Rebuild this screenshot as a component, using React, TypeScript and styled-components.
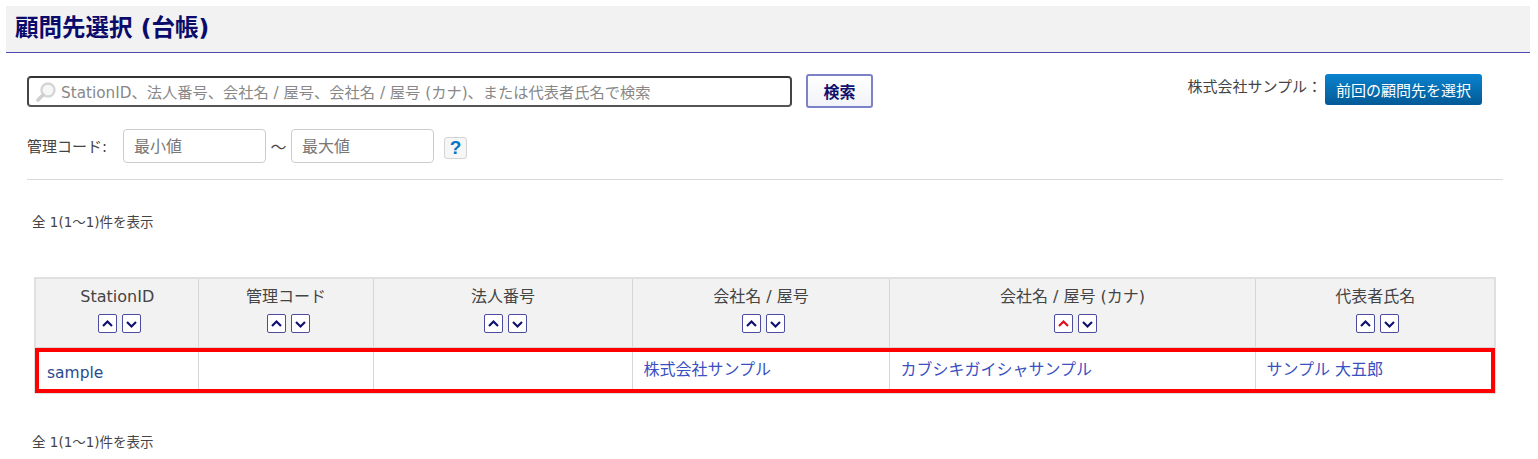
import React from "react";
import styled, { createGlobalStyle } from "styled-components";

const FONT = `"DejaVu Sans", "Noto Sans CJK JP", sans-serif`;

const Global = createGlobalStyle`
  html, body { margin: 0; padding: 0; background: #fff; }
  body { font-family: ${FONT}; color: #444; overflow: hidden; }
`;

const Page = styled.div`
  width: 1538px;
  height: 459px;
  padding-top: 6px;
  box-sizing: border-box;
`;

const TitleBar = styled.div`
  margin: 0 8px 0 6px;
  height: 47px;
  box-sizing: border-box;
  background: #f2f2f2;
  border-bottom: 1px solid #4a4aae;
  padding: 0 9px;
  display: flex;
  align-items: center;
`;

const Title = styled.h1`
  margin: 0;
  font-size: 23.5px;
  line-height: 1;
  font-weight: 700;
  color: #0b0b6b;
`;

const Content = styled.div`
  padding: 21px 35px 0 27px;
`;

const SearchRow = styled.div`
  display: flex;
  align-items: flex-start;
  height: 34px;
`;

const SearchBox = styled.div`
  width: 765px;
  height: 31px;
  margin-top: 2px;
  box-sizing: border-box;
  border: 2px solid #444;
  border-radius: 4px;
  border-top-color: #333;
  border-bottom-color: #555;
  background: #fff;
  display: flex;
  align-items: center;
  gap: 4px;
  padding: 0 0 2px 6px;
  font-size: 15.25px;
  color: #888;
  white-space: nowrap;
`;

const SearchButton = styled.button`
  margin-left: 14px;
  width: 67px;
  height: 34px;
  padding: 0;
  box-sizing: border-box;
  border: 2px solid #7b82c8;
  border-radius: 3px;
  background: linear-gradient(#ffffff, #f2f3f8);
  color: #12126e;
  font: 700 16px ${FONT};
`;

const Previous = styled.div`
  margin-left: auto;
  margin-right: 21px;
  display: flex;
  align-items: flex-start;
  gap: 3px;
`;

const PreviousName = styled.span`
  font-size: 15px;
  line-height: 22px;
  margin-top: 2px;
  color: #444;
  white-space: nowrap;
`;

const PreviousButton = styled.button`
  width: 157px;
  height: 31px;
  padding: 0;
  border: 0;
  border-radius: 3px;
  background: linear-gradient(#0a83cf, #035a96);
  color: #fff;
  font: 400 15px ${FONT};
  white-space: nowrap;
`;

const CodeRow = styled.div`
  display: flex;
  align-items: center;
  margin-top: 21px;
  height: 34px;
`;

const CodeLabel = styled.span`
  width: 96px;
  padding-bottom: 2px;
  font-size: 15px;
  color: #444;
  white-space: nowrap;
`;

const RangeInput = styled.div`
  width: 143px;
  height: 34px;
  box-sizing: border-box;
  border: 1px solid #ccc;
  border-radius: 4px;
  padding: 0 0 2px 10px;
  display: flex;
  align-items: center;
  font-size: 16px;
  color: #777;
`;

const Tilde = styled.span`
  width: 25px;
  text-align: center;
  font-size: 16px;
  color: #444;
`;

const HelpButton = styled.span`
  margin: 4px 0 0 10px;
  width: 23px;
  height: 22px;
  box-sizing: border-box;
  border: 1px solid #d4d4d4;
  border-radius: 3px;
  background: #f6f6f6;
  color: #0a74c4;
  display: flex;
  align-items: center;
  justify-content: center;
  font: 700 19px "Liberation Sans", sans-serif;
`;

const Divider = styled.hr`
  margin: 16px 0 0;
  border: 0;
  border-top: 1px solid #d8d8d8;
`;

const Count = styled.p<{ $top: number }>`
  margin: ${(p) => p.$top}px 0 0 5px;
  font-size: 13.5px;
  line-height: 18px;
  color: #444;
`;

const Table = styled.table`
  margin: 46px 0 0 7px;
  width: 1460px;
  border-collapse: collapse;
  table-layout: fixed;
  border: 2px solid #e0e0e0;
`;

const HeadCell = styled.th`
  height: 68px;
  padding: 0;
  background: #f2f2f2;
  border: 1px solid #d6d6d6;
  font-weight: 400;
  font-size: 16px;
  color: #444;
  vertical-align: top;
`;

const HeadLabel = styled.div`
  margin-top: 6px;
  padding-left: 1px;
  line-height: 24px;
`;

const SortGroup = styled.div`
  display: flex;
  justify-content: center;
  gap: 5px;
  margin-top: 5px;
  padding-left: 6px;
`;

const SortButton = styled.span`
  width: 19px;
  height: 19px;
  box-sizing: border-box;
  border: 1px solid #4c4c9e;
  border-radius: 2px;
  background: #fff;
  display: flex;
  align-items: center;
  justify-content: center;
`;

const DataRow = styled.tr`
  outline: 4px solid #f00;
  outline-offset: -4px;
`;

const DataCell = styled.td`
  height: 45px;
  box-sizing: border-box;
  padding: 0 11px 3px;
  border: 1px solid #d6d6d6;
  border-top: 0;
  font-size: 16px;
  background: #fff;
`;

const IdLink = styled.a`
  color: #2b4a8e;
  display: inline-block;
  font-size: 15.5px;
  padding-top: 10px;
`;

const RowLink = styled.a`
  color: #3a50c0;
`;

function Chevron({ dir, color }: { dir: "up" | "down"; color: string }) {
  const d = dir === "up" ? "M2 8 L6.5 3.5 L11 8" : "M2 4 L6.5 8.5 L11 4";
  return (
    <svg width="13" height="12" viewBox="0 0 13 12" fill="none">
      <path d={d} stroke={color} strokeWidth="2.2" />
    </svg>
  );
}

function Sort({ active }: { active?: boolean }) {
  return (
    <SortGroup>
      <SortButton>
        <Chevron dir="up" color={active ? "#e0101c" : "#12126e"} />
      </SortButton>
      <SortButton>
        <Chevron dir="down" color="#12126e" />
      </SortButton>
    </SortGroup>
  );
}

function Magnifier() {
  return (
    <svg width="22" height="22" viewBox="0 0 22 22" fill="none" style={{ flex: "none", marginTop: 2 }}>
      <circle cx="13" cy="9" r="6.5" stroke="#d6d6d6" strokeWidth="2.4" fill="#f7f7f7" />
      <path d="M8 14 L3 19" stroke="#cfcfcf" strokeWidth="3.6" strokeLinecap="round" />
    </svg>
  );
}

const columns: { label: string; width: number; active?: boolean }[] = [
  { label: "StationID", width: 163 },
  { label: "管理コード", width: 175 },
  { label: "法人番号", width: 259 },
  { label: "会社名 / 屋号", width: 257 },
  { label: "会社名 / 屋号 (カナ)", width: 366, active: true },
  { label: "代表者氏名", width: 240 },
];

export default function App() {
  return (
    <Page>
      <Global />
      <TitleBar>
        <Title>顧問先選択 (台帳)</Title>
      </TitleBar>
      <Content>
        <SearchRow>
          <SearchBox>
            <Magnifier />
            StationID、法人番号、会社名 / 屋号、会社名 / 屋号 (カナ)、または代表者氏名で検索
          </SearchBox>
          <SearchButton>検索</SearchButton>
          <Previous>
            <PreviousName>株式会社サンプル：</PreviousName>
            <PreviousButton>前回の顧問先を選択</PreviousButton>
          </Previous>
        </SearchRow>
        <CodeRow>
          <CodeLabel>管理コード:</CodeLabel>
          <RangeInput>最小値</RangeInput>
          <Tilde>～</Tilde>
          <RangeInput>最大値</RangeInput>
          <HelpButton>?</HelpButton>
        </CodeRow>
        <Divider />
        <Count $top={33}>全 1(1～1)件を表示</Count>
        <Table>
          <colgroup>
            {columns.map((c) => (
              <col key={c.label} style={{ width: c.width }} />
            ))}
          </colgroup>
          <thead>
            <tr>
              {columns.map((c) => (
                <HeadCell key={c.label}>
                  <HeadLabel>{c.label}</HeadLabel>
                  <Sort active={c.active} />
                </HeadCell>
              ))}
            </tr>
          </thead>
          <tbody>
            <DataRow>
              <DataCell>
                <IdLink>sample</IdLink>
              </DataCell>
              <DataCell />
              <DataCell />
              <DataCell>
                <RowLink>株式会社サンプル</RowLink>
              </DataCell>
              <DataCell>
                <RowLink>カブシキガイシャサンプル</RowLink>
              </DataCell>
              <DataCell>
                <RowLink>サンプル 大五郎</RowLink>
              </DataCell>
            </DataRow>
          </tbody>
        </Table>
        <Count $top={39}>全 1(1～1)件を表示</Count>
      </Content>
    </Page>
  );
}
